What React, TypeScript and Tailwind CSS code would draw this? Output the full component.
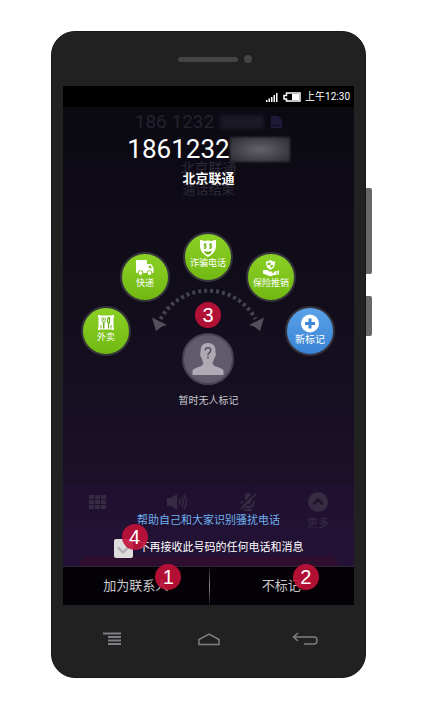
import type { ReactNode } from "react";

const FONT = "font-[Roboto,'Noto_Sans_CJK_SC',sans-serif]";

function Marker({ children, className }: { children: ReactNode; className: string }) {
  return (
    <span
      className={`pointer-events-none absolute z-10 flex size-[26px] items-center justify-center rounded-full bg-[#c4123a]/90 font-['Liberation_Sans',Arial,sans-serif] text-xl leading-none text-white ${className}`}
    >
      {children}
    </span>
  );
}

function FoodIcon() {
  return (
    <svg width="18" height="17" viewBox="0 0 18 17">
      <path d="M1 3.500V1h2.500v.5h11V1H17v2.500h-.5v10h.5V16h-2.500v-.5h-11v.5H1v-2.500h.5v-10z" fill="#fff" />
      <g fill="none" stroke="#6bb315">
        <path d="M5 3.500v3q0 1.800 1.700 1.800T8.300 6.500v-3M6.700 3.500v3" strokeWidth="0.900" />
        <path d="M6.700 8v6.500" strokeWidth="1.500" />
        <path d="M11.500 14.500V9M11.500 9q-1.500-1-1-3.500L11.500 3.500h1V9z" strokeWidth="1.200" />
        <path d="M4 11v3.500M14 11v3.500" strokeWidth="0.900" />
      </g>
    </svg>
  );
}

function TruckIcon() {
  return (
    <svg width="18" height="17" viewBox="0 0 18 17">
      <path d="M1 0h9q1 0 1 1v12H1q-1 0-1-1V1q0-1 1-1z" fill="#fff" />
      <path d="M11 4h3.500q.8 0 1.300.8L17.500 8v5H11z" fill="#fff" />
      <path d="M12.800 5.500h1.700L16 8.300h-3.200z" fill="#7cc51d" />
      <circle cx="4.500" cy="13" r="2.400" fill="#fff" stroke="#7cc51d" />
      <circle cx="13.500" cy="13" r="2.400" fill="#fff" stroke="#7cc51d" />
    </svg>
  );
}

function MaskIcon() {
  return (
    <svg width="18" height="17" viewBox="0 0 18 17">
      <path d="M1 0q2.500.2 4 1 4-1 8 0 1.500-.8 4-1v7q-1 6.500-8 10Q2 13.500 1 7z" fill="#fff" />
      <g fill="none" stroke="#6bb315" strokeWidth="1">
        <path d="M7.500 4.300q-2.500-1-2.500.5t1.300 1 .7 1.500-2.500.5M6.200 3v6" />
        <path d="M13 4.300q-2.500-1-2.500.5t1.300 1 .7 1.500-2.500.5M11.700 3v6" />
        <path d="M5 10.500q4 2.500 8 0-1 4-4 4t-4-4z" fill="#6bb315" stroke="none" />
      </g>
    </svg>
  );
}

function InsuranceIcon() {
  return (
    <svg width="18" height="17" viewBox="0 0 18 17">
      <path d="M8.500 0q2 1.500 4.500 1.500.5 6-4.500 8.500Q3.500 7.500 4 1.500 6.500 1.500 8.500 0z" fill="#fff" />
      <path d="M8.500 2v3h3q-.5 2-3 3.200V5h-3V3q2 0 3-1z" fill="#7cc51d" />
      <path
        d="M1 10h3.500q2 0 3 1.500h2.500q1.200 1-.3 1.500H7l4 .3 2.200-2.300h1.300v4H12q-2.500 1.800-5.500.8L1 13.500zM15.300 10.500H17v4h-1.700z"
        fill="#fff"
      />
    </svg>
  );
}

function PlusIcon() {
  return (
    <svg width="18" height="19" viewBox="0 0 18 19">
      <circle cx="9" cy="9.500" r="9" fill="#fff" />
      <path d="M9 4.500v10M4 9.500h10" stroke="#3c87d6" strokeWidth="3" />
    </svg>
  );
}

const tags = [
  { label: "外卖", icon: <FoodIcon />, place: "left-0 top-[74px]", green: true },
  { label: "快递", icon: <TruckIcon />, place: "left-[39px] top-5", green: true },
  { label: "诈骗电话", icon: <MaskIcon />, place: "left-[102px] top-0", green: true },
  { label: "保险推销", icon: <InsuranceIcon />, place: "left-[165px] top-5", green: true },
  { label: "新标记", icon: <PlusIcon />, place: "left-[204px] top-[74px]", green: false },
];

function TagDial() {
  return (
    <div className="relative mx-auto mt-[45px] h-[153px] w-[255px]">
      <svg className="absolute inset-0" width="255" height="153" viewBox="0 0 255 153">
        <path
          d="M79.500 87A54 54 0 0 1 174.500 87"
          fill="none"
          stroke="#45424f"
          strokeWidth="4"
          strokeDasharray="3 3"
        />
        <path d="M71 85.500l15 7.500-5 1.500-6 4.500zM183 85.500l-15 7.500 5 1.500 6 4.500z" fill="#524f5b" />
      </svg>
      {tags.map((t) => (
        <button
          key={t.label}
          type="button"
          className={`absolute flex size-[50px] flex-col items-center rounded-full border-2 pt-1.5 whitespace-nowrap text-white ${t.place} ${
            t.green
              ? "border-[#35343c] bg-linear-to-b from-[#8bd024] to-[#71b912] text-[9px] leading-[13px]"
              : "border-[#35343c] bg-linear-to-b from-[#5aa2e8] to-[#3883d4] text-[10px] leading-[13px]"
          }`}
        >
          <span className="block shrink-0">{t.icon}</span>
          <span>{t.label}</span>
        </button>
      ))}
      <svg className="absolute top-[101px] left-[101px]" width="52" height="52" viewBox="0 0 52 52">
        <circle cx="26" cy="26" r="25" fill="#5f5a6c" stroke="#454152" strokeWidth="2" />
        <path
          d="M26 10q8 0 7.500 9 1 1 0 4-.7 2-1.500 3-1 3-1.500 4 1 3 5 4 5 1.500 6 3.500v4.500h-31V37.500q1-2 6-3.500 4-1 5-4-1-1-1.500-4-.8-1-1.500-3-1-3 0-4-.5-9 7.500-9z"
          fill="#adaab3"
        />
        <path d="M23.200 17.500q0-2.700 2.800-2.700t2.800 2.500q0 1.500-1.600 2.500-1.200.8-1.200 2.400M26 23.600v1.800" fill="none" stroke="#56515f" strokeWidth="1.500" />
      </svg>
      <Marker className="top-[70px] left-[114px]">3</Marker>
    </div>
  );
}

function StatusBar() {
  return (
    <div className="flex h-[21px] items-center justify-end gap-1 bg-black pr-1 text-[10px] leading-none text-white">
      <svg width="14" height="10" viewBox="0 0 14 10" fill="#fff">
        <path d="M1 8h1.500v2H1zM3.500 6.500H5V10H3.500zM6 5h1.500v5H6zM8.500 3H10v7H8.500zM11 1h1.500v9H11z" />
      </svg>
      <svg width="18" height="10" viewBox="0 0 18 10">
        <path d="M3.500 1H17v8H3.500V7H1V3.500h2.500z" fill="none" stroke="#fff" strokeWidth="1.500" />
        <path d="M9 2h7v6H9z" fill="#fff" />
      </svg>
      <span>上午12:30</span>
    </div>
  );
}

/* Dimmed in-call screen that shows through behind the tagging panel. */
function DimmedCall() {
  return (
    <div aria-hidden="true" className="pointer-events-none absolute inset-0 flex flex-col items-center overflow-hidden text-[#2b2935]">
      <div className="mt-[5px] flex items-center gap-1.5 text-[19px] leading-5 text-[#24222d]">
        <span>186 1232</span>
        <span className="h-3.5 w-11 bg-[#1b1926] blur-[2px]" />
        <svg width="12" height="14" viewBox="0 0 12 14">
          <path d="M1 1h7l4 4v8H1z" fill="#1c1a38" />
          <path d="M2 10.500h9" stroke="#100d1c" />
        </svg>
      </div>
      <div className="mt-[26px] text-sm leading-5">北京联通</div>
      <div className="mt-0.5 text-[13px] leading-5">通话结束</div>
      <div className="mt-auto flex h-[72px] w-full justify-between bg-[#2a1446]/20 px-[26px] text-[11px] text-[#372b44]">
        <svg className="mt-[9px]" width="18" height="18" viewBox="0 0 18 18" fill="currentColor">
          <path d="M0 2h5v4H0zM6 2h5v4H6zM12 2h5v4h-5zM0 7h5v4H0zM6 7h5v4H6zM12 7h5v4h-5zM0 12h5v4H0zM6 12h5v4H6zM12 12h5v4h-5z" />
        </svg>
        <svg className="mt-[9px] ml-2" width="22" height="18" viewBox="0 0 22 18">
          <path d="M1 5h4l6-4v16l-6-4H1z" fill="currentColor" />
          <path d="M13 6q2 3 0 6M15.500 4q3.500 5 0 10M18 2q4.500 7 0 14" fill="none" stroke="currentColor" strokeWidth="1.500" />
        </svg>
        <svg className="mt-[9px]" width="18" height="18" viewBox="0 0 18 18">
          <rect x="6" y="0" width="6" height="11" rx="3" fill="currentColor" />
          <path d="M3 8q0 6 6 6t6-6M9 14v3M5 17h8" fill="none" stroke="currentColor" strokeWidth="1.800" />
          <path d="M1 14L15 0" stroke="#1f132b" strokeWidth="1.500" />
          <path d="M2 16L17 1" stroke="currentColor" strokeWidth="1.800" />
        </svg>
        <div className="flex w-5 flex-col items-center gap-1 whitespace-nowrap">
          <svg className="mt-2 shrink-0" width="20" height="20" viewBox="0 0 20 20">
            <circle cx="10" cy="10" r="10" fill="currentColor" />
            <path d="M5.500 12L10 7.500l4.500 4.500" fill="none" stroke="#1f152b" strokeWidth="2.500" />
          </svg>
          <span>更多</span>
        </div>
      </div>
      <div className="self-stretch bg-[#2a1446]/20 px-4">
        <div className="h-2.5 rounded-t-xl bg-[#300f2e]" />
      </div>
    </div>
  );
}

export default function App() {
  return (
    <main className={`bg-white pt-[31px] pr-14 pb-[35px] pl-[51px] ${FONT}`}>
      <div className="relative rounded-[24px] border border-[#171717] bg-[#212121]">
        <span className="absolute top-[156px] -right-[7px] h-[86px] w-1.5 rounded-r-xs bg-[#686868]" />
        <span className="absolute top-[264px] -right-[7px] h-10 w-1.5 rounded-r-xs bg-[#686868]" />

        <div className="flex h-[54px] items-center justify-center gap-1.5 pl-[13px]">
          <span className="h-[5px] w-[60px] rounded-full bg-[#454547]" />
          <span className="size-2 rounded-full bg-[#454547]" />
        </div>

        <div className="mx-[11px]">
          <StatusBar />
          <section className="relative bg-linear-to-b from-[#0b0912] via-[#140e1e] via-55% to-[#231233]">
            <DimmedCall />
            <div className="relative flex flex-col pt-7 pb-2">
              <h1 className="flex items-center justify-center text-[26px] leading-7 font-normal text-white">
                1861232
                <span className="h-[25px] w-[60px] bg-radial from-[#66646a] to-[#2a2831] blur-[1px]" />
              </h1>
              <p className="mt-2 text-center text-[13px] leading-4 font-bold text-white">北京联通</p>
              <TagDial />
              <p className="mt-2 text-center text-[10px] leading-4 text-[#c9c8cc]">暂时无人标记</p>
              <p className="mt-[104px] text-center text-[11px] leading-4 text-[#6fb0ee]">帮助自己和大家识别骚扰电话</p>
              <label className="relative mx-auto mt-[9px] flex h-5 items-center gap-1.5 text-[11px] whitespace-nowrap text-white">
                <span className="relative flex size-[19px]">
                  <input type="checkbox" defaultChecked className="peer size-full appearance-none rounded-xs bg-[#deddde]" />
                  <svg className="pointer-events-none absolute inset-0 hidden peer-checked:block" width="19" height="19" viewBox="0 0 19 19">
                    <path d="M4 8.500l5 5 7-7" fill="none" stroke="#b5b4b7" strokeWidth="2.500" />
                  </svg>
                </span>
                不再接收此号码的任何电话和消息
                <Marker className="-top-[14px] left-2">4</Marker>
              </label>
            </div>
          </section>
          <div className="grid h-[39px] grid-cols-2 border-t border-[#2d2535] bg-[#040207] text-[13px] text-[#c9c8cb]">
            <button type="button" className="flex items-center justify-center">
              <span className="relative">
                加为联系人
                <Marker className="-top-3 -right-[13px]">1</Marker>
              </span>
            </button>
            <button type="button" className="relative flex items-center justify-center">
              <span className="absolute inset-y-0 left-0 w-px bg-linear-to-b from-[#15101c] via-[#8c8992] to-[#15101c]" />
              <span className="relative">
                不标记
                <Marker className="-top-3 -right-[18px]">2</Marker>
              </span>
            </button>
          </div>
        </div>

        <nav className="flex h-[72px] items-center justify-between px-[47px] pb-1">
          <button type="button" aria-label="菜单" className="flex w-[26px] justify-center">
            <svg width="18" height="14" viewBox="0 0 18 14">
              <path d="M0 1.500h18M5 5h13M5 8.500h13M5 12h13" stroke="#7e7e84" strokeWidth="2" />
            </svg>
          </button>
          <button type="button" aria-label="主页" className="flex w-[26px] justify-center">
            <svg width="22" height="14" viewBox="0 0 22 14">
              <path d="M1 12.500V7.500L11 2l10 5.500v5z" fill="none" stroke="#7e7e84" strokeWidth="1.500" />
            </svg>
          </button>
          <button type="button" aria-label="返回" className="flex w-[26px] justify-center">
            <svg width="26" height="14" viewBox="0 0 26 14">
              <path d="M6 1L1.500 5 6 9M1.500 5H22q3 0 3 3.500T22 12H12" fill="none" stroke="#7e7e84" strokeWidth="1.500" />
            </svg>
          </button>
        </nav>
      </div>
    </main>
  );
}
